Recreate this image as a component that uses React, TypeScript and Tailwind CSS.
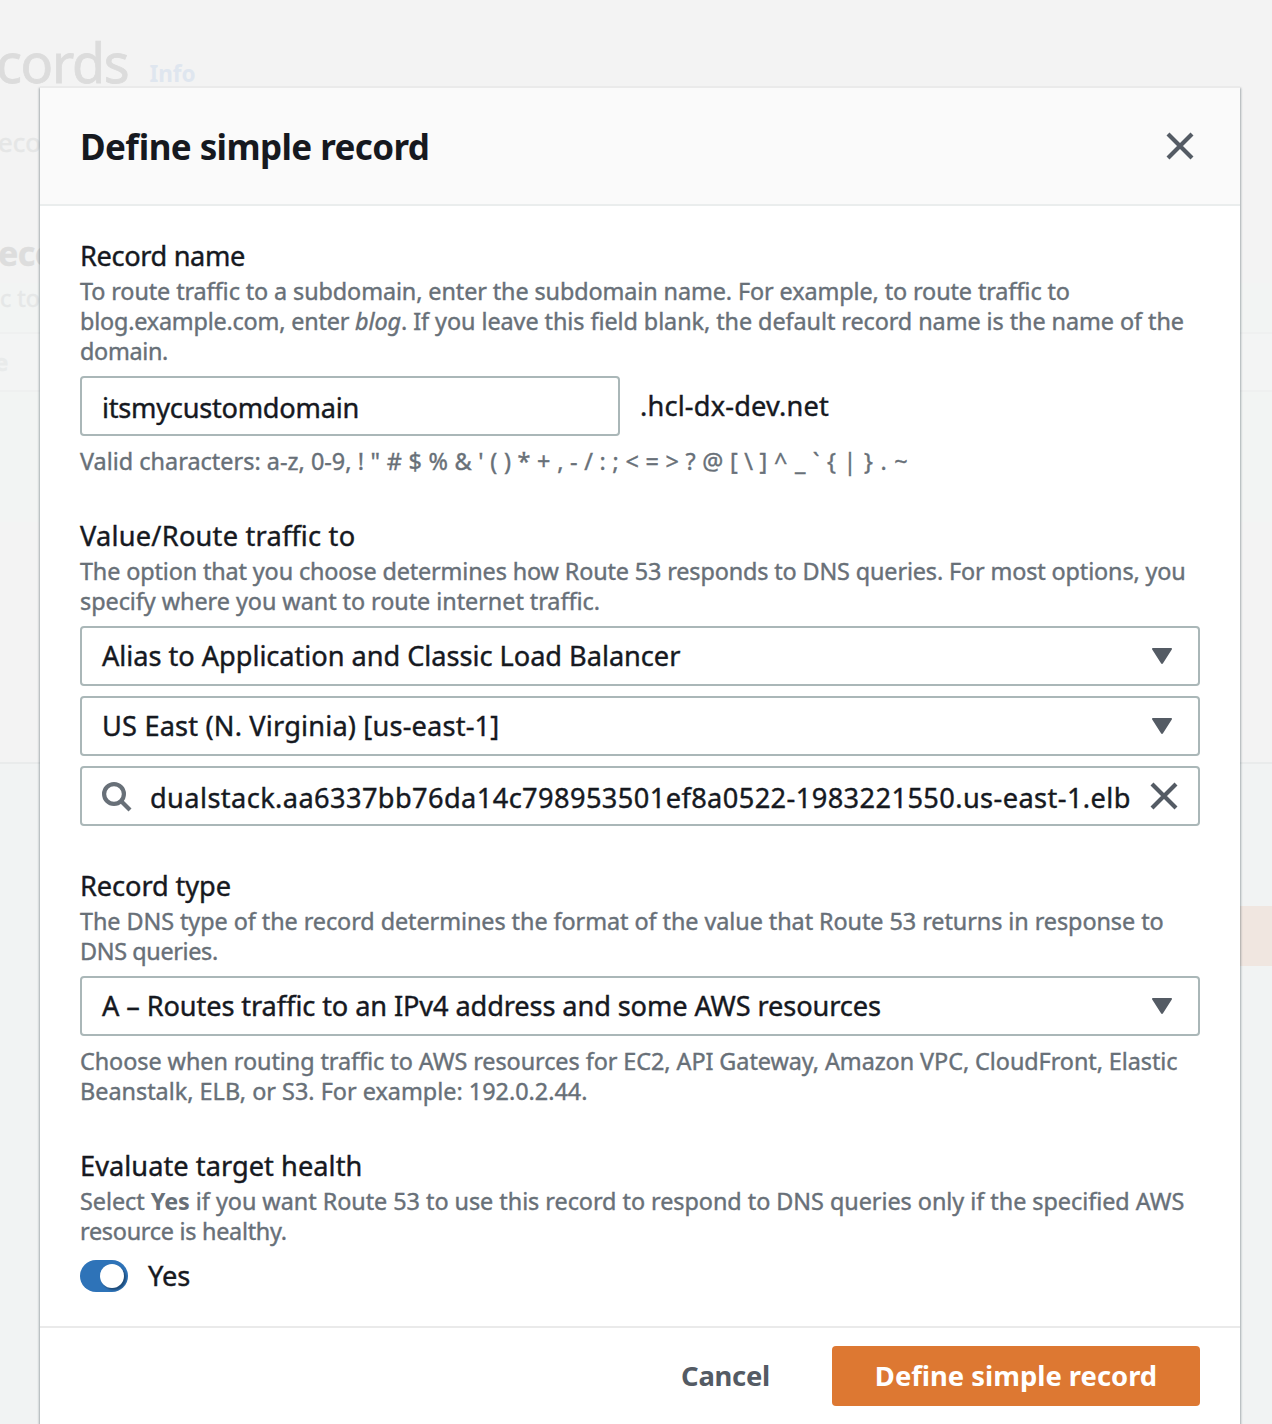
import type { ReactNode } from 'react'

function Label({ children, className = '' }: { children: ReactNode; className?: string }) {
  return <div className={`h-10 whitespace-nowrap text-[27.2px] leading-10 text-[#16191f] ${className}`}>{children}</div>
}

function Line({ children, className = '' }: { children: ReactNode; className?: string }) {
  return <span className={`block h-[30px] whitespace-nowrap text-[23.4px] leading-[30px] text-[#687078] ${className}`}>{children}</span>
}

function Select({ children, className = '' }: { children: ReactNode; className?: string }) {
  return (
    <button className={`flex h-[60px] w-full items-center justify-between rounded-[4px] border-2 border-[#aab7b8] bg-white pr-[26px] pl-5 text-left text-[27.2px] leading-10 whitespace-nowrap text-[#16191f] ${className}`}>
      <span>{children}</span>
      <svg width="20" height="16" viewBox="0 0 20 16" fill="#545b64">
        <path d="M1 0h18c1 0 1.300 .8.800 1.500L11 15.300c-.5.800-1.500.800-2 0L.2 1.500C-.3.800 0 0 1 0Z" />
      </svg>
    </button>
  )
}

function Cross() {
  return (
    <svg width="28" height="28" viewBox="0 0 28 28" fill="none" stroke="#545b64" strokeWidth="4.200">
      <path d="M2 2l24 24M26 2 2 26" />
    </svg>
  )
}

function Backdrop() {
  return (
    <div className="absolute inset-0 bg-[#f1f3f3]">
      <div className="h-[764px] border-b-2 border-[#e9ebeb] bg-[#f3f3f3]">
        <div className="flex h-[88px] items-baseline whitespace-nowrap">
          <span className="-ml-[4px] text-[54px] leading-[124px] tracking-[-1.3px] text-[#dcdcdc] [-webkit-text-stroke:0.8px]">cords</span>
          <span className="relative -top-px ml-[21px] text-[22.5px] font-bold text-[#dfe6ef] [-webkit-text-stroke:0px]">Info</span>
        </div>
        <div className="mt-[34px] -ml-[2px] h-10 text-[26px] leading-10 whitespace-nowrap text-[#e5e6e6]">eco</div>
        <div className="mt-[69px] -ml-[2px] h-11 text-[34px] leading-[44px] font-bold tracking-[-0.5px] whitespace-nowrap text-[#dddddd]">eco</div>
        <div className="mt-[8px] bg-[#f2f4f3] pb-[0.5px] text-[23.4px] leading-[30px] whitespace-nowrap text-[#e5e7e7]">c to</div>
        <div className="-mt-[0.5px] bg-[#f2f4f3] pt-[19px]">
          <div className="h-[60px] border-y-2 border-[#eff0f0] bg-[#f3f4f4] text-[24px] leading-[56px] font-bold text-[#e9ebeb]"><span className="-ml-[6px]">e</span></div>
        </div>
        <div className="h-[130px] bg-[#f2f4f3]" />
      </div>
      <div className="mt-[142px] ml-auto h-[60px] w-[120px] bg-[#f0e6e0]" />
    </div>
  )
}

export default function App() {
  return (
    <div className="relative h-[1424px] w-[1272px] overflow-hidden font-['Noto_Sans',sans-serif] [font-feature-settings:'liga'] [-webkit-text-stroke:0.4px]">
      <Backdrop />
      <div className="relative mt-[86px] ml-10 h-[1338px] w-[1200px] border-t-2 border-[#eaeaea] bg-white shadow-[1px_2px_2px_0_rgba(0,28,36,0.3),-1px_2px_2px_0_rgba(0,28,36,0.3)]">
        <header className="flex h-[118px] items-center justify-between border-b-2 border-[#eaeded] bg-[#fafafa] pr-[46px] pl-10">
          <h1 className="pt-[2px] text-[35px] leading-[44px] font-bold tracking-[-0.6px] text-[#16191f] [-webkit-text-stroke:0px]">Define simple record</h1>
          <Cross />
        </header>

        <main className="flex h-[1122px] flex-col gap-10 border-b-2 border-[#eaeaea] px-10 pt-[30px]">
          <section>
            <Label className="tracking-[-0.37px]">Record name</Label>
            <Line className="tracking-[-0.105px]">To route traffic to a subdomain, enter the subdomain name. For example, to route traffic to</Line>
            <Line className="tracking-[-0.07px]"><span className="tracking-[-0.2px]">blog.example.com, enter </span><i>blog</i>. If you leave this field blank, the default record name is the name of the</Line>
            <Line className="tracking-[-0.33px]">domain.</Line>
            <div className="mt-[10px] flex items-center gap-5 text-[27.2px] leading-10 text-[#16191f]">
              <div className="h-[60px] w-[540px] rounded-[4px] border-2 border-[#aab7b8] bg-white px-5 pt-[10px] tracking-[-0.26px]">itsmycustomdomain</div>
              <span className="tracking-[0.18px]">.hcl-dx-dev.net</span>
            </div>
            <Line className="mt-[10px] tracking-[0.28px]">
              <span className="tracking-[0.02px]">Valid characters: a-z, 0-9, </span>
              {'! " # $ % & \' ( ) * + , - / : ; < = > ? @ [ \\ ] '}
              <span className="tracking-[0.75px]">{'^ _ ` { | } . ~'}</span>
            </Line>
          </section>

          <section>
            <Label className="tracking-[0.24px]">Value/Route traffic to</Label>
            <Line className="tracking-[-0.135px]">The option that you choose determines how Route 53 responds to DNS queries. For most options, you</Line>
            <Line className="tracking-[-0.05px]">specify where you want to route internet traffic.</Line>
            <div className="mt-[10px] flex flex-col gap-[10px]">
              <Select className="tracking-[-0.04px]">Alias to Application and Classic Load Balancer</Select>
              <Select className="tracking-[0.17px]">US East (N. Virginia) [us-east-1]</Select>
              <div className="flex h-[60px] items-center rounded-[4px] border-2 border-[#aab7b8] bg-white pr-[20px] pl-5">
                <svg className="mt-[2px]" width="30" height="30" viewBox="0 0 30 30" fill="none" stroke="#687078" strokeWidth="4.200">
                  <circle cx="12" cy="12" r="9.900" />
                  <path d="M19 19l9 9" />
                </svg>
                <span className="ml-[18px] w-[982px] overflow-hidden pt-[3px] text-[27.2px] leading-10 tracking-[0.4px] whitespace-nowrap text-[#16191f]">dualstack.aa6337bb76da14c798953501ef8a0522-1983221550.us-east-1.elb</span>
                <div className="ml-auto"><Cross /></div>
              </div>
            </div>
          </section>

          <section>
            <Label className="tracking-[-0.09px]">Record type</Label>
            <Line className="tracking-[-0.066px]">The DNS type of the record determines the format of the value that Route 53 returns in response to</Line>
            <Line className="tracking-[-0.36px]">DNS queries.</Line>
            <div className="my-[10px]">
              <Select className="tracking-[-0.115px]">A – Routes traffic to an IPv4 address and some AWS resources</Select>
            </div>
            <Line className="tracking-[-0.065px]">Choose when routing traffic to AWS resources for EC2, API Gateway, Amazon VPC, CloudFront, Elastic</Line>
            <Line>Beanstalk, ELB, or S3. For example: 192.0.2.44.</Line>
          </section>

          <section>
            <Label className="tracking-[0.04px]">Evaluate target health</Label>
            <Line className="tracking-[-0.04px]">Select <b className="[-webkit-text-stroke:0px]">Yes</b> if you want Route 53 to use this record to respond to DNS queries only if the specified AWS</Line>
            <Line className="tracking-[-0.27px]">resource is healthy.</Line>
            <div className="mt-[10px] flex h-10 items-center gap-5">
              <div className="flex h-8 w-12 items-center justify-end rounded-full bg-[#2e73b8] pr-1">
                <div className="size-6 rounded-full bg-white shadow-[2px_2px_2px_0_rgba(0,0,0,0.35)]" />
              </div>
              <Label>Yes</Label>
            </div>
          </section>
        </main>

        <footer className="flex items-center justify-end gap-[62px] pt-[18px] pr-10 text-[27.4px] leading-10 font-bold [-webkit-text-stroke:0px]">
          <button className="tracking-[-0.25px] text-[#545b64]">Cancel</button>
          <button className="h-[60px] w-[368px] rounded-[4px] bg-[#dd7832] whitespace-nowrap text-white">Define simple record</button>
        </footer>
      </div>
    </div>
  )
}
